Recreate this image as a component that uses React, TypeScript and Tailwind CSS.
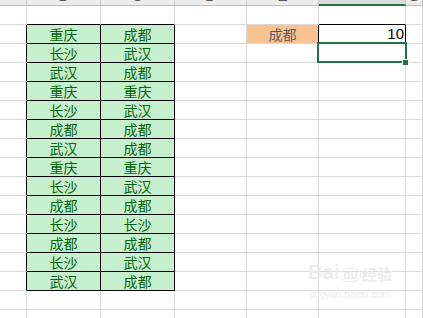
import React from "react";

const colW = ["w-[27px]", "w-[74px]", "w-[74px]", "w-[72px]", "w-[72px]", "w-[87px]", "flex-1"];
const headers = ["", "B", "C", "D", "E", "F", "G"];

const bCol = ["重庆", "长沙", "武汉", "重庆", "长沙", "成都", "武汉", "重庆", "长沙", "成都", "长沙", "成都", "长沙", "武汉"];
const cCol = ["成都", "武汉", "成都", "重庆", "武汉", "成都", "成都", "重庆", "武汉", "成都", "长沙", "成都", "武汉", "成都"];

function bordered(r: number, c: number) {
  if (r >= 2 && r <= 15 && (c === 1 || c === 2)) return true;
  if (r === 2 && c === 5) return true;
  return false;
}

function cellText(r: number, c: number): string {
  if (r >= 2 && r <= 15 && c === 1) return bCol[r - 2];
  if (r >= 2 && r <= 15 && c === 2) return cCol[r - 2];
  if (r === 2 && c === 4) return "成都";
  if (r === 2 && c === 5) return "10";
  return "";
}

export default function App() {
  const rows = Array.from({ length: 17 }, (_, i) => i + 1);
  return (
    <div
      className="relative w-[423px] h-[318px] overflow-hidden bg-white"
      style={{ fontFamily: '"Noto Sans CJK SC", "Liberation Sans", sans-serif' }}
    >
      {/* header */}
      <div className="flex h-[6px] bg-[#ececec]">
        {headers.map((h, c) => (
          <div
            key={c}
            className={`${colW[c]} h-[6px] shrink-0 overflow-hidden flex items-end justify-center border-r border-r-[#c6c6c6] ${
              c === 5 ? "border-b-2 border-b-[#217346] bg-[#dcdcdc]" : "border-b border-b-[#c0c0c0]"
            }`}
          >
            <span className="text-[15px] leading-none text-[#555] mb-[2px]" style={{ fontFamily: '"Liberation Sans", sans-serif' }}>{h}</span>
          </div>
        ))}
      </div>
      {rows.map((r) => (
        <div key={r} className="flex h-[19px]">
          {colW.map((w, c) => {
            const isB = bordered(r, c);
            const rightBlack = isB || bordered(r, c + 1);
            const bottomBlack = isB || bordered(r + 1, c);
            const text = cellText(r, c);
            let bg = "bg-white";
            let color = "text-black";
            if (r >= 2 && r <= 15 && (c === 1 || c === 2)) {
              bg = "bg-[#c6efce]";
              color = "text-[#0a6410]";
            } else if (r === 2 && c === 4) {
              bg = "bg-[#f9c291]";
              color = "text-[#5c5a6c]";
            }
            const isNum = text === "10";
            return (
              <div
                key={c}
                className={`${w} h-[19px] shrink-0 border-r border-b flex items-end ${bg} ${
                  rightBlack ? "border-r-black" : "border-r-[#d9d9d9]"
                } ${bottomBlack ? "border-b-black" : "border-b-[#d9d9d9]"} ${
                  isNum ? "justify-end pr-[1px]" : "justify-center"
                }`}
              >
                {text && (
                  <span
                    className={`${color} ${isNum ? "text-[15px]" : "text-[14px]"} leading-[18px]`}
                    style={isNum ? { fontFamily: '"Liberation Sans", sans-serif' } : undefined}
                  >
                    {text}
                  </span>
                )}
              </div>
            );
          })}
        </div>
      ))}

      {/* selection box on F3 */}
      <div className="absolute left-[317px] top-[42px] w-[90px] h-[21px] border-2 border-[#217346]" />
      <div className="absolute left-[402px] top-[59px] w-[7px] h-[7px] bg-[#217346] border border-white" />

      {/* watermark */}
      <div className="absolute left-[300px] top-[262px] w-[100px] flex flex-col items-center pointer-events-none">
        <div className="flex items-end text-[#ececec] font-bold leading-none" style={{ fontFamily: '"Liberation Sans", "Noto Sans CJK SC", sans-serif' }}>
          <span className="text-[20px]">Bai</span>
          <span className="text-[12px] mx-[1px] px-[2px] rounded-full border border-[#ececec]">du</span>
          <span className="text-[15px]">经验</span>
        </div>
        <span className="text-[10px] text-[#ededed] mt-[8px] leading-none" style={{ fontFamily: '"Liberation Sans", sans-serif' }}>
          jingyan.baidu.com
        </span>
      </div>
    </div>
  );
}
